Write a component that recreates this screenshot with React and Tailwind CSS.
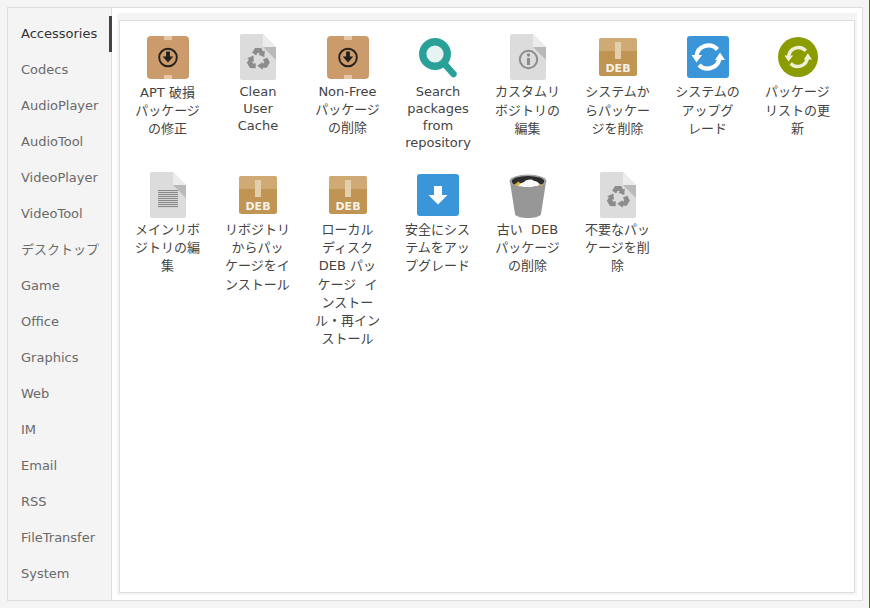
const cats = ["Accessories","Codecs","AudioPlayer","AudioTool","VideoPlayer","VideoTool","デスクトップ","Game","Office","Graphics","Web","IM","Email","RSS","FileTransfer","System"];

function BoxIcon() {
  return (
    <svg width="42" height="43" viewBox="0 0 42 43">
      <rect x="0" y="0" width="42" height="43" rx="4" fill="#cb9b6b" />
      <rect x="17" y="0" width="8" height="4" fill="#e6c6a6" />
      <rect x="17" y="39" width="8" height="4" fill="#e6c6a6" />
      <circle cx="21" cy="21.5" r="8.800" fill="none" stroke="#231f1c" strokeWidth="1.900" />
      <path d="M18.600 15.500h3.800v5h3.400L20.500 26.500 15.200 20.500h3.400z" fill="#231f1c" transform="translate(0.500 0)" />
    </svg>
  );
}

function FileBase({ children }) {
  return (
    <svg width="36" height="46" viewBox="0 0 36 46">
      <path d="M2 0H23L36 13V44a2 2 0 0 1-2 2H2a2 2 0 0 1-2-2V2a2 2 0 0 1 2-2z" fill="#dcdcdc" />
      <path d="M23 0L36 13H23z" fill="#ececec" />
      <path d="M23 13H36V26z" fill="#b9b9b9" />
      {children}
    </svg>
  );
}

const recyclePiece = "M-3.200 -11.500H3L4.900 -8L6.500 -9L6 -2.200L0 -5L1.600 -5.900L.7 -6.500H-.9L-2 -4L-6.200 -6.700Z";

function RecycleFile() {
  return (
    <FileBase>
      <g transform="translate(18.300 25.500)" fill="#8c8c8c">
        <path d={recyclePiece} />
        <path d={recyclePiece} transform="rotate(120)" />
        <path d={recyclePiece} transform="rotate(240)" />
      </g>
    </FileBase>
  );
}

function InfoFile() {
  return (
    <FileBase>
      <circle cx="18.500" cy="25.500" r="8.700" fill="none" stroke="#8c8c8c" strokeWidth="2" />
      <circle cx="18.500" cy="21" r="1.700" fill="#8c8c8c" />
      <rect x="17" y="24" width="3" height="7" fill="#8c8c8c" />
    </FileBase>
  );
}

function TextFile() {
  return (
    <FileBase>
      <g fill="#8a8a8a">
        {[18,20,22,24,26,28,30,32,34].map((y) => <rect key={y} x="8" y={y} width="20" height="1.100" />)}
      </g>
    </FileBase>
  );
}

function SearchIcon() {
  return (
    <svg width="38" height="40" viewBox="0 0 38 40">
      <circle cx="16" cy="16" r="12.300" fill="#e6f3f3" stroke="#2aa198" strokeWidth="7.400" />
      <path d="M26 26.500L34.500 36" stroke="#2aa198" strokeWidth="6.400" strokeLinecap="round" />
    </svg>
  );
}

function DebIcon() {
  return (
    <svg width="38" height="38" viewBox="0 0 38 38">
      <rect width="38" height="38" rx="2.500" fill="#c09553" />
      <path d="M2.500 0H35.500A2.500 2.500 0 0 1 38 2.500V13H0V2.500A2.500 2.500 0 0 1 2.500 0z" fill="#cfaa75" />
      <rect x="16" y="4" width="6" height="17" fill="#e3cfab" />
      <text x="19" y="34" textAnchor="middle" fontSize="11" fontWeight="700" fill="#f7f2e8" fontFamily="DejaVu Sans, sans-serif">DEB</text>
    </svg>
  );
}

function Arrows({ color }) {
  return (
    <g fill="none" stroke={color} strokeWidth="4.200">
      <path d="M9.500 20.500A12 12 0 0 1 30.500 13.500" />
      <path d="M32.500 21.500A12 12 0 0 1 12 29" />
      <path d="M4.500 19H15L9.500 26.500z" fill={color} stroke="none" />
      <path d="M28 24H38L33 16.500z" fill={color} stroke="none" />
    </g>
  );
}

function SyncIcon() {
  return (
    <svg width="42" height="42" viewBox="0 0 42 42">
      <rect width="42" height="42" rx="3" fill="#3a96d8" />
      <Arrows color="#ffffff" />
    </svg>
  );
}

function GreenSyncIcon() {
  return (
    <svg width="40" height="40" viewBox="0 0 40 40">
      <circle cx="20" cy="20" r="20" fill="#8a9c00" />
      <g transform="translate(2.800 2.800) scale(0.820)"><Arrows color="#eef1d8" /></g>
    </svg>
  );
}

function DownloadIcon() {
  return (
    <svg width="42" height="42" viewBox="0 0 42 42">
      <rect width="42" height="42" rx="3" fill="#3a96d8" />
      <path d="M17 12h8v9h5.500L21 30.500 11.500 21H17z" fill="#fff" />
    </svg>
  );
}

function TrashIcon() {
  return (
    <svg width="38" height="44" viewBox="0 0 38 44">
      <path d="M1 8L6 40c.3 2.500 7 4 13 4s12.700-1.500 13-4L37 8z" fill="#979797" />
      <ellipse cx="19" cy="7" rx="18.500" ry="6.500" fill="#a2a2a2" />
      <ellipse cx="19" cy="7.500" rx="16.200" ry="5.500" fill="#2b2b2b" />
      <path d="M9 12c1-3 4-3 6-4 3-3 8-3 10-1 3 0 5 2 6 4-3 1.500-7 2-12 2s-7-.2-10-1z" fill="#fafaf8" />
      <path d="M5.500 10.500l4-3 2 2-3 3z" fill="#d9b23c" />
      <path d="M30 9.500l3 1.200-2 1.800z" fill="#d9b23c" />
    </svg>
  );
}

const items = [
  { icon: BoxIcon, top: "mt-[2px]", text: "mt-[4px] pr-[1px] leading-[18.2px]", lines: ["APT 破損","パッケージ","の修正"] },
  { icon: RecycleFile, top: "", text: "mt-[3px] leading-[17px]", lines: ["Clean","User","Cache"] },
  { icon: BoxIcon, top: "mt-[2px]", text: "mt-[3px] pr-[1px] leading-[18.2px]", lines: ["Non-Free","パッケージ","の削除"] },
  { icon: SearchIcon, top: "mt-[4px]", text: "mt-[3px] leading-[17px]", lines: ["Search","packages","from","repository"] },
  { icon: InfoFile, top: "", text: "mt-[3.4px] pr-[1px] leading-[18.2px]", lines: ["カスタムリ","ボジトリの","編集"] },
  { icon: DebIcon, top: "mt-[4px]", text: "mt-[3.4px] pr-[1px] leading-[18.2px]", lines: ["システムか","らパッケー","ジを削除"] },
  { icon: SyncIcon, top: "mt-[2px]", text: "mt-[3.4px] pr-[1px] leading-[18.2px]", lines: ["システムの","アップグ","レード"] },
  { icon: GreenSyncIcon, top: "mt-[3px]", text: "mt-[3.4px] pr-[1px] leading-[18.2px]", lines: ["パッケージ","リストの更","新"] },
  { icon: TextFile, top: "", text: "mt-[3px] pr-[1px] leading-[18.2px]", lines: ["メインリボ","ジトリの編","集"] },
  { icon: DebIcon, top: "mt-[4px]", text: "mt-[3px] pr-[1px] leading-[18.2px]", lines: ["リボジトリ","からパッ","ケージをイ","ンストール"] },
  { icon: DebIcon, top: "mt-[4px]", text: "mt-[3px] pr-[1px] leading-[18.2px]", lines: ["ローカル","ディスク","DEB パッ","ケージ  イ","ンストー","ル・再イン","ストール"] },
  { icon: DownloadIcon, top: "mt-[2px]", text: "mt-[3px] pr-[1px] leading-[18.2px]", lines: ["安全にシス","テムをアッ","プグレード"] },
  { icon: TrashIcon, top: "mt-[2px]", text: "mt-[3px] pr-[1px] leading-[18.2px]", lines: ["古い  DEB","パッケージ","の削除"] },
  { icon: RecycleFile, top: "", text: "mt-[3px] pr-[1px] leading-[18.2px]", lines: ["不要なパッ","ケージを削","除"] },
];

export default function App() {
  return (
    <div
      className="h-[608px] w-[870px] overflow-hidden border-r border-[#d8232a] bg-[#f4f4f4] p-[7px] text-[13px]"
      style={{ fontFamily: '"DejaVu Sans", "Noto Sans CJK JP", sans-serif' }}
    >
      <div className="flex h-[594px] w-[856px] border border-[#dddddd] bg-white">
        <nav className="w-[104px] shrink-0 border-r border-[#dddddd] bg-[#f4f4f4] pt-[8px]">
          {cats.map((c, i) => (
            <div
              key={c}
              className={
                i === 0
                  ? "flex h-9 w-[104px] items-center border-r-[3px] border-[#444444] pl-[13px] text-[#333333]"
                  : "flex h-9 items-center pl-[13px] text-[#6a6a6a]"
              }
            >
              {c}
            </div>
          ))}
        </nav>
        <div className="flex-1 pt-[5px] pr-[5px] pb-[6px] pl-[5px]">
          <div className="h-[582px] bg-[#f4f4f4] pt-[7px] pr-[2px] pb-[2px] pl-[2px]">
            <div className="h-[573px] border border-[#dddddd] bg-white pt-[13px] pl-[3px]">
              <div className="grid grid-cols-[repeat(8,90px)] items-start gap-y-[21px]">
                {items.map((it, idx) => {
                  const Icon = it.icon;
                  return (
                    <div key={idx} className="flex flex-col items-center">
                      <div className="flex h-[46px] items-start justify-center">
                        <div className={it.top}><Icon /></div>
                      </div>
                      <div className={it.text + " text-center text-[#444444]"}>
                        {it.lines.map((l) => <div key={l} className="whitespace-pre">{l}</div>)}
                      </div>
                    </div>
                  );
                })}
              </div>
            </div>
          </div>
        </div>
      </div>
    </div>
  );
}
